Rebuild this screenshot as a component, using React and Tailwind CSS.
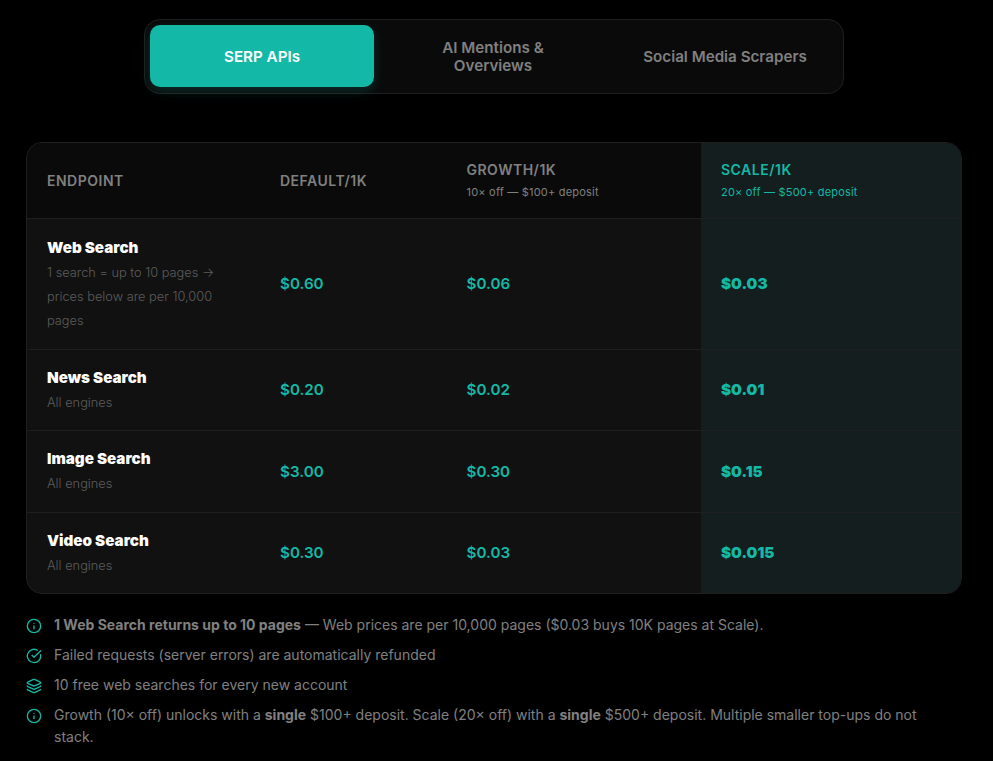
import { Info, CircleCheckBig, Layers } from "lucide-react";

const tabs = [
  { label: "SERP APIs", active: true },
  { label: "AI Mentions & Overviews" },
  { label: "Social Media Scrapers" },
];

const rows = [
  {
    name: "Web Search",
    note: "1 search = up to 10 pages → prices below are per 10,000 pages",
    prices: ["$0.60", "$0.06", "$0.03"],
    height: "h-[131px]",
  },
  { name: "News Search", note: "All engines", prices: ["$0.20", "$0.02", "$0.01"], height: "h-[81px]" },
  { name: "Image Search", note: "All engines", prices: ["$3.00", "$0.30", "$0.15"], height: "h-[82px]" },
  { name: "Video Search", note: "All engines", prices: ["$0.30", "$0.03", "$0.015"], height: "h-[81px]" },
];

const App = () => {
  return (
    <div className="min-h-[761px] bg-black font-['Inter',sans-serif] overflow-hidden">
      <div className="w-[988px]">
        <div className="flex justify-center pt-[19px]">
          <div className="w-[700px] h-[75px] flex gap-[6px] pt-[5px] px-[5px] pb-[6px] rounded-2xl border border-[#1f1f1f] bg-[#0a0a0a]">
            {tabs.map((tab) => (
              <button
                key={tab.label}
                className={
                  tab.active
                    ? "w-[224px] pt-[2px] rounded-[10px] bg-[#14b8a6] text-white text-[15.2px] leading-[18.5px] font-semibold shadow-[0_4px_12px_rgba(20,184,166,0.2)]"
                    : "flex-1 px-[28px] pt-[2px] rounded-[10px] text-[#808080] text-[15.2px] leading-[18.5px] font-semibold"
                }
              >
                {tab.label}
              </button>
            ))}
          </div>
        </div>

        <div className="mx-[26px] mt-[48px] rounded-2xl border border-[#1f1f1f] overflow-hidden bg-[#111111]">
          <table className="w-full table-fixed border-collapse text-left">
            <colgroup>
              <col className="w-[233px]" />
              <col className="w-[186.5px]" />
              <col className="w-[254.5px]" />
              <col />
            </colgroup>
            <thead>
              <tr className="h-[75px] bg-[#0a0a0a] border-b border-[#1f1f1f]">
                <th className="pl-5 font-semibold text-[14px] tracking-[0.5px] text-[#808080]">ENDPOINT</th>
                <th className="pl-5 font-semibold text-[14px] tracking-[0.5px] text-[#808080]">DEFAULT/1K</th>
                <th className="pl-5 font-semibold text-[14px] tracking-[0.5px] text-[#808080]">
                  GROWTH/1K
                  <div className="mt-[5px] mb-[2px] text-[11px] leading-[14px] font-normal tracking-[0.2px] text-[#808080]">
                    10× off — $100+ deposit
                  </div>
                </th>
                <th className="pl-5 font-semibold text-[14px] tracking-[0.5px] text-[#14b8a6] bg-[#141e1e]">
                  SCALE/1K
                  <div className="mt-[5px] mb-[2px] text-[11px] leading-[14px] font-normal tracking-[0.2px] text-[#14b8a6]">
                    20× off — $500+ deposit
                  </div>
                </th>
              </tr>
            </thead>
            <tbody>
              {rows.map((row, i) => (
                <tr key={row.name} className={`${row.height} ${i < rows.length - 1 ? "border-b border-[#1f1f1f]" : ""}`}>
                  <td className="pl-5 pr-8 pt-[3px] align-middle">
                    <div className="text-[15.2px] leading-[20px] font-black text-white">{row.name}</div>
                    <div className="mt-[3px] text-[12.8px] leading-[24px] font-light text-[#5c5c5c]">{row.note}</div>
                  </td>
                  <td className="pl-5 pt-[2px] text-[15.2px] font-semibold text-[#14b8a6]">{row.prices[0]}</td>
                  <td className="pl-5 pt-[2px] text-[15.2px] font-semibold text-[#14b8a6]">{row.prices[1]}</td>
                  <td className="pl-5 pt-[2px] text-[15.2px] font-black text-[#14b8a6] bg-[#141e1e]">{row.prices[2]}</td>
                </tr>
              ))}
            </tbody>
          </table>
        </div>

        <ul className="ml-[26px] mr-[40px] mt-[19.6px] flex flex-col gap-[7.6px] text-[14px] leading-[22.4px] text-[#808080]">
          <li className="flex gap-3">
            <Info size={16} className="shrink-0 mt-[4px] text-[#14b8a6]" />
            <span>
              <strong className="font-bold">1 Web Search returns up to 10 pages</strong> — Web prices are per 10,000 pages ($0.03 buys 10K pages at Scale).
            </span>
          </li>
          <li className="flex gap-3">
            <CircleCheckBig size={16} className="shrink-0 mt-[4px] text-[#14b8a6]" />
            <span>Failed requests (server errors) are automatically refunded</span>
          </li>
          <li className="flex gap-3">
            <Layers size={16} className="shrink-0 mt-[4px] text-[#14b8a6]" />
            <span>10 free web searches for every new account</span>
          </li>
          <li className="flex gap-3">
            <Info size={16} className="shrink-0 mt-[4px] text-[#14b8a6]" />
            <span>
              Growth (10× off) unlocks with a <strong className="font-bold">single</strong> $100+ deposit. Scale (20× off) with a <strong className="font-bold">single</strong> $500+ deposit. Multiple smaller top-ups do not stack.
            </span>
          </li>
        </ul>
      </div>
    </div>
  );
};

export default App;
